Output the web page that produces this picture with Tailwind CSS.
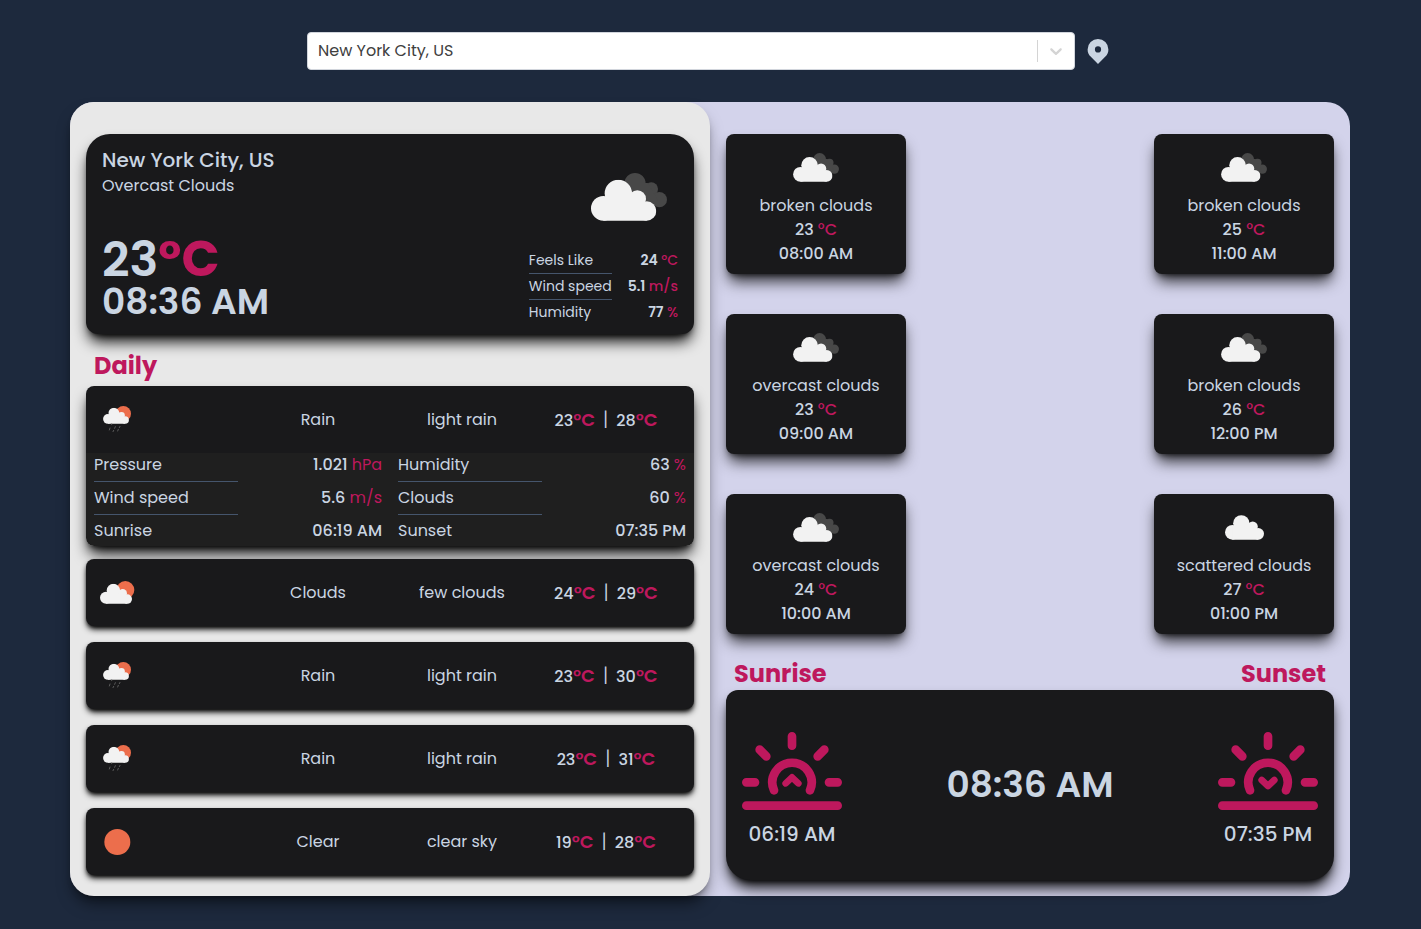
<!DOCTYPE html>
<html lang="en">
<head>
<meta charset="utf-8">
<meta name="viewport" content="width=device-width, initial-scale=1">
<title>Weather</title>
<script src="https://cdn.jsdelivr.net/npm/@tailwindcss/browser@4"></script>
</head>
<body class="min-h-screen bg-slate-800 pr-px font-['Poppins','Inter',sans-serif] text-base text-slate-300">

<!-- Shared icon shapes -->
<svg class="hidden" aria-hidden="true">
  <symbol id="cloud" viewBox="0 0 196 124">
    <g fill="#f2f2f2"><circle cx="37" cy="86" r="37"/><circle cx="82" cy="41" r="41"/><circle cx="139" cy="58" r="26"/><circle cx="167" cy="94" r="29"/><path d="M37 60h45l57-2 28 36v29H37z"/></g>
  </symbol>
  <symbol id="clouds" viewBox="0 0 228 144">
    <g fill="#484848"><circle cx="132" cy="32" r="32"/><circle cx="181" cy="48" r="20"/><circle cx="205" cy="80" r="23"/><path d="M120 30h50l30 50-10 20-50-30z"/></g>
    <use href="#cloud" x="0" y="20" width="196" height="124"/>
  </symbol>
  <symbol id="rain" viewBox="0 0 120 120">
    <circle cx="76" cy="41" r="23" fill="#ec6e4c"/>
    <use href="#cloud" x="15" y="23" width="78" height="49"/>
    <path d="M41 72v2M52 80l-2 5M66 79l-2 4M36 84l-2 6M61 88l-2 5M47 91l-2 4" stroke="#5a5a5a" stroke-width="3" stroke-linecap="round"/>
  </symbol>
  <symbol id="few" viewBox="0 0 120 120">
    <circle cx="82" cy="51" r="27" fill="#ec6e4c"/>
    <use href="#cloud" x="6" y="32" width="96" height="61"/>
  </symbol>
  <symbol id="sun" viewBox="0 0 120 120"><circle cx="58" cy="60" r="39" fill="#ec6e4c"/></symbol>
  <symbol id="horizon" viewBox="66 216 300 264">
    <path fill="none" stroke="currentColor" stroke-width="26" stroke-linecap="round" d="M216 259v28M119 299l20 20M313 299l-20 20M79 397h26M327 397h26M79 467h274M162 421a59 59 0 1 1 108 0"/>
  </symbol>
</svg>

<header class="mx-auto flex max-w-7xl items-center justify-center gap-2 px-4 pt-8">
  <div class="relative w-full max-w-3xl">
    <select aria-label="City" class="block h-[38px] w-full appearance-none rounded border border-gray-300 bg-white px-2.5 text-base text-neutral-700">
      <option>New York City, US</option>
    </select>
    <div class="pointer-events-none absolute inset-y-0 right-0 flex items-center gap-2 py-2 pr-[9px] text-neutral-300">
      <span class="h-full w-px bg-neutral-300"></span>
      <svg class="size-5" viewBox="0 0 20 20" fill="currentColor" aria-hidden="true"><path d="M4.516 7.548c0.436-0.446 1.043-0.481 1.576 0l3.908 3.747 3.908-3.747c0.533-0.481 1.141-0.446 1.574 0 0.436 0.445 0.408 1.197 0 1.615-0.406 0.418-4.695 4.502-4.695 4.502-0.217 0.223-0.502 0.335-0.787 0.335s-0.57-0.112-0.789-0.335c0 0-4.287-4.084-4.695-4.502s-0.436-1.17 0-1.615z"/></svg>
    </div>
  </div>
  <button type="button" aria-label="Use my location" class="flex size-[30px] items-center justify-center">
    <svg class="h-[27px] w-[22px]" viewBox="0 0 22 27" fill="currentColor" aria-hidden="true"><path fill-rule="evenodd" d="M11 1a10.400 10.400 0 0 0-10.400 10.400c0 3 1.200 5.400 3 7.200L11 26l7.400-7.400c1.800-1.800 3-4.200 3-7.200A10.400 10.400 0 0 0 11 1zm0 7.300a3.100 3.100 0 1 1 0 6.200a3.100 3.100 0 0 1 0-6.200z"/></svg>
  </button>
</header>

<main class="mx-auto mt-8 grid max-w-7xl grid-cols-2 rounded-3xl bg-[#d3d3eb]">

  <section class="rounded-3xl bg-[#e8e8e8] px-4 pt-8 pb-5 shadow-lg shadow-black/50">
    <article class="flex justify-between rounded-t-3xl rounded-b-xl bg-[#19191b] px-4 py-3 shadow-lg shadow-black">
      <div class="flex flex-col">
        <h1 class="text-xl font-medium">New York City, US</h1>
        <p>Overcast Clouds</p>
        <p class="mt-9 h-12 text-5xl leading-none font-semibold">23<span class="text-[50px] font-bold text-[#be185d]">°C</span></p>
        <p class="text-4xl font-semibold">08:36 AM</p>
      </div>
      <div class="flex flex-col items-end justify-between">
        <svg class="mt-[27px] mr-[11px] h-12 w-[76px]" aria-hidden="true"><use href="#clouds"/></svg>
        <dl class="grid grid-cols-[auto_auto] gap-x-4 text-sm">
          <dt class="border-b border-slate-600 pt-0.5 pb-[3px]">Feels Like</dt><dd class="pt-0.5 text-right font-semibold">24 <span class="font-medium text-[#be185d]">°C</span></dd>
          <dt class="border-b border-slate-600 pt-0.5 pb-[3px]">Wind speed</dt><dd class="pt-0.5 text-right font-semibold">5.1 <span class="font-medium text-[#be185d]">m/s</span></dd>
          <dt class="pt-0.5">Humidity</dt><dd class="pt-0.5 text-right font-semibold">77 <span class="font-medium text-[#be185d]">%</span></dd>
        </dl>
      </div>
    </article>

    <h2 class="mt-4 mb-1 px-2 text-2xl font-bold text-[#be185d]">Daily</h2>

    <div class="mb-[13px] rounded-lg shadow-lg shadow-black">
      <button type="button" aria-expanded="true" class="grid h-[67px] w-full grid-cols-4 items-center rounded-t-lg bg-[#19191b] px-4">
        <svg class="-ml-1 size-10" aria-hidden="true"><use href="#rain"/></svg>
        <span>Rain</span><span>light rain</span>
        <span class="font-medium">23<span class="text-lg font-semibold text-[#be185d]">°C</span><span class="px-2 text-xl leading-none font-light">|</span>28<span class="text-lg font-semibold text-[#be185d]">°C</span></span>
      </button>
      <div class="grid grid-cols-2 gap-4 rounded-b-lg bg-[#1f1f1f] px-2 pb-[3px]">
        <dl class="grid grid-cols-2">
          <dt class="border-b border-slate-600 pb-1">Pressure</dt><dd class="text-right font-medium">1.021 <span class="font-normal text-[#be185d]">hPa</span></dd>
          <dt class="border-b border-slate-600 py-1">Wind speed</dt><dd class="pt-1 text-right font-medium">5.6 <span class="font-normal text-[#be185d]">m/s</span></dd>
          <dt class="pt-1">Sunrise</dt><dd class="pt-1 text-right font-medium">06:19 AM</dd>
        </dl>
        <dl class="grid grid-cols-2">
          <dt class="border-b border-slate-600 pb-1">Humidity</dt><dd class="text-right font-medium">63 <span class="font-normal text-[#be185d]">%</span></dd>
          <dt class="border-b border-slate-600 py-1">Clouds</dt><dd class="pt-1 text-right font-medium">60 <span class="font-normal text-[#be185d]">%</span></dd>
          <dt class="pt-1">Sunset</dt><dd class="pt-1 text-right font-medium">07:35 PM</dd>
        </dl>
      </div>
    </div>

    <div class="grid gap-4">
      <button type="button" aria-expanded="false" class="grid h-[67px] w-full grid-cols-4 items-center rounded-lg bg-[#19191b] px-4 shadow-md shadow-black">
        <svg class="-ml-1 size-10" aria-hidden="true"><use href="#few"/></svg>
        <span>Clouds</span><span>few clouds</span>
        <span class="font-medium">24<span class="text-lg font-semibold text-[#be185d]">°C</span><span class="px-2 text-xl leading-none font-light">|</span>29<span class="text-lg font-semibold text-[#be185d]">°C</span></span>
      </button>
      <button type="button" aria-expanded="false" class="grid h-[67px] w-full grid-cols-4 items-center rounded-lg bg-[#19191b] px-4 shadow-md shadow-black">
        <svg class="-ml-1 size-10" aria-hidden="true"><use href="#rain"/></svg>
        <span>Rain</span><span>light rain</span>
        <span class="font-medium">23<span class="text-lg font-semibold text-[#be185d]">°C</span><span class="px-2 text-xl leading-none font-light">|</span>30<span class="text-lg font-semibold text-[#be185d]">°C</span></span>
      </button>
      <button type="button" aria-expanded="false" class="grid h-[67px] w-full grid-cols-4 items-center rounded-lg bg-[#19191b] px-4 shadow-md shadow-black">
        <svg class="-ml-1 size-10" aria-hidden="true"><use href="#rain"/></svg>
        <span>Rain</span><span>light rain</span>
        <span class="font-medium">23<span class="text-lg font-semibold text-[#be185d]">°C</span><span class="px-2 text-xl leading-none font-light">|</span>31<span class="text-lg font-semibold text-[#be185d]">°C</span></span>
      </button>
      <button type="button" aria-expanded="false" class="grid h-[67px] w-full grid-cols-4 items-center rounded-lg bg-[#19191b] px-4 shadow-md shadow-black">
        <svg class="-ml-1 size-10" aria-hidden="true"><use href="#sun"/></svg>
        <span>Clear</span><span>clear sky</span>
        <span class="font-medium">19<span class="text-lg font-semibold text-[#be185d]">°C</span><span class="px-2 text-xl leading-none font-light">|</span>28<span class="text-lg font-semibold text-[#be185d]">°C</span></span>
      </button>
    </div>
  </section>

  <section class="px-4 pt-8 pb-4">
    <div class="flex justify-between text-center">
      <div class="grid gap-10">
        <article class="flex h-[140px] w-[180px] flex-col items-center justify-center rounded-lg bg-[#19191b] shadow-lg shadow-black/80">
          <div class="mb-0.5 flex h-[50px] items-center"><svg class="h-[29px] w-[46px]" aria-hidden="true"><use href="#clouds"/></svg></div>
          <p>broken clouds</p><p class="font-medium">23 <span class="text-[#be185d]">°C</span></p><p class="font-medium">08:00 AM</p>
        </article>
        <article class="flex h-[140px] w-[180px] flex-col items-center justify-center rounded-lg bg-[#19191b] shadow-lg shadow-black/80">
          <div class="mb-0.5 flex h-[50px] items-center"><svg class="h-[29px] w-[46px]" aria-hidden="true"><use href="#clouds"/></svg></div>
          <p>overcast clouds</p><p class="font-medium">23 <span class="text-[#be185d]">°C</span></p><p class="font-medium">09:00 AM</p>
        </article>
        <article class="flex h-[140px] w-[180px] flex-col items-center justify-center rounded-lg bg-[#19191b] shadow-lg shadow-black/80">
          <div class="mb-0.5 flex h-[50px] items-center"><svg class="h-[29px] w-[46px]" aria-hidden="true"><use href="#clouds"/></svg></div>
          <p>overcast clouds</p><p class="font-medium">24 <span class="text-[#be185d]">°C</span></p><p class="font-medium">10:00 AM</p>
        </article>
      </div>
      <div class="grid gap-10">
        <article class="flex h-[140px] w-[180px] flex-col items-center justify-center rounded-lg bg-[#19191b] shadow-lg shadow-black/80">
          <div class="mb-0.5 flex h-[50px] items-center"><svg class="h-[29px] w-[46px]" aria-hidden="true"><use href="#clouds"/></svg></div>
          <p>broken clouds</p><p class="font-medium">25 <span class="text-[#be185d]">°C</span></p><p class="font-medium">11:00 AM</p>
        </article>
        <article class="flex h-[140px] w-[180px] flex-col items-center justify-center rounded-lg bg-[#19191b] shadow-lg shadow-black/80">
          <div class="mb-0.5 flex h-[50px] items-center"><svg class="h-[29px] w-[46px]" aria-hidden="true"><use href="#clouds"/></svg></div>
          <p>broken clouds</p><p class="font-medium">26 <span class="text-[#be185d]">°C</span></p><p class="font-medium">12:00 PM</p>
        </article>
        <article class="flex h-[140px] w-[180px] flex-col items-center justify-center rounded-lg bg-[#19191b] shadow-lg shadow-black/80">
          <div class="mb-0.5 flex h-[50px] items-center"><svg class="h-[25px] w-[39px]" aria-hidden="true"><use href="#cloud"/></svg></div>
          <p>scattered clouds</p><p class="font-medium">27 <span class="text-[#be185d]">°C</span></p><p class="font-medium">01:00 PM</p>
        </article>
      </div>
    </div>

    <div class="mt-6 flex justify-between px-2 text-2xl font-bold text-[#be185d]"><h2>Sunrise</h2><h2>Sunset</h2></div>
    <article class="flex h-[190px] items-center justify-between rounded-t-xl rounded-b-3xl bg-[#19191b] px-4 shadow-lg shadow-black">
      <div class="flex flex-col items-center gap-2.5">
        <svg class="h-[88px] w-[100px] text-[#be185d]" viewBox="66 216 300 264" aria-hidden="true"><use href="#horizon" x="66" y="216" width="300" height="264"/><path d="M197 400l19-18 19 18" fill="none" stroke="currentColor" stroke-width="20" stroke-linecap="round" stroke-linejoin="round"/></svg>
        <p class="text-xl font-medium">06:19 AM</p>
      </div>
      <p class="text-4xl font-semibold">08:36 AM</p>
      <div class="flex flex-col items-center gap-2.5">
        <svg class="h-[88px] w-[100px] text-[#be185d]" viewBox="66 216 300 264" aria-hidden="true"><use href="#horizon" x="66" y="216" width="300" height="264"/><path d="M197 390l19 18 19-18" fill="none" stroke="currentColor" stroke-width="20" stroke-linecap="round" stroke-linejoin="round"/></svg>
        <p class="text-xl font-medium">07:35 PM</p>
      </div>
    </article>
  </section>
</main>
</body>
</html>
